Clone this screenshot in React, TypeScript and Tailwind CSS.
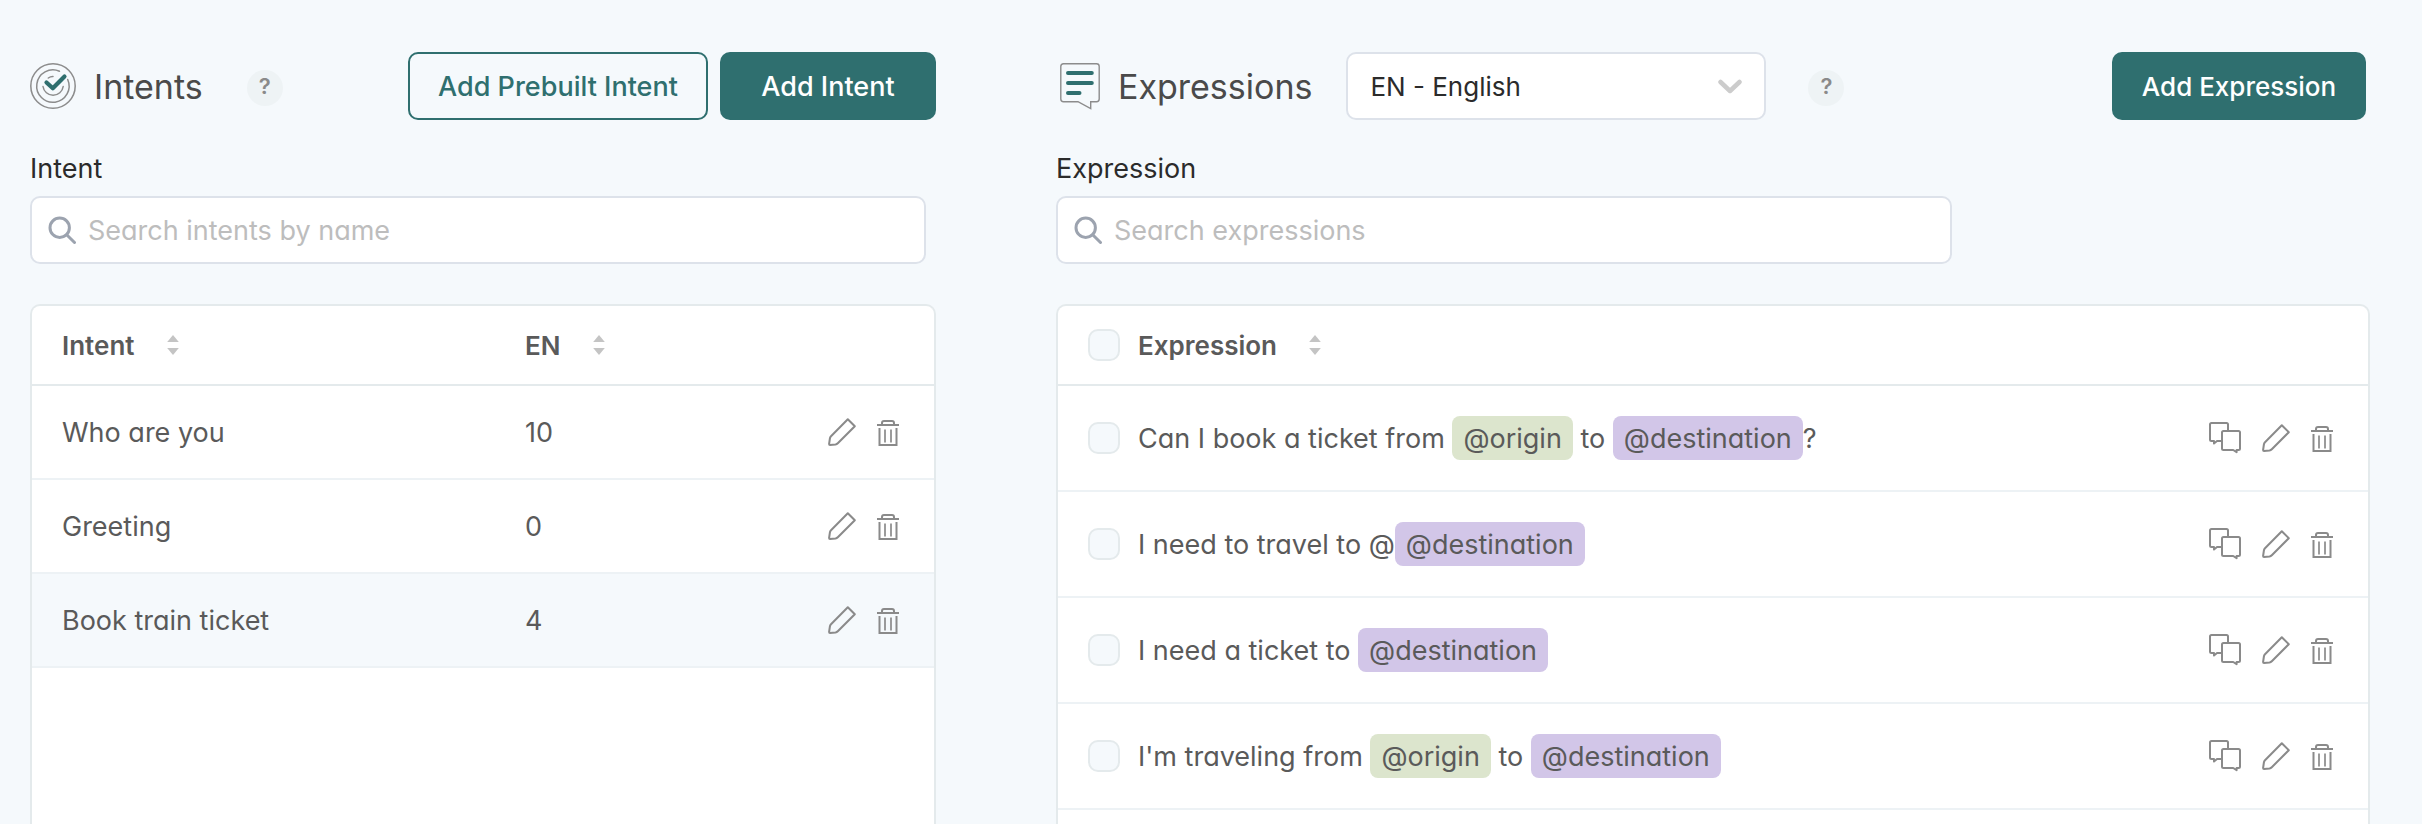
import React, { useState } from "react";

const fontStack =
  "font-['Inter','Liberation_Sans',sans-serif] [font-feature-settings:'cv11']";

function IntentsIcon() {
  return (
    <svg width="46" height="46" viewBox="0 0 46 46" fill="none" stroke="#8c8c8c" strokeWidth="1.5" strokeLinecap="round" aria-hidden="true">
      <circle cx="23" cy="23" r="22.2" />
      <path d="M29.500 8.300A16.200 16.200 0 1 0 37.700 16.500" />
      <path d="M13 23.500A10.200 10.200 0 0 0 33.200 23.500" />
      <path d="M18.300 15Q20.500 13.400 23 13.500" />
      <path d="M16.500 19.500L22.800 25.300L34.500 13.500" stroke="#2f6f6f" strokeWidth="4.200" strokeLinejoin="round" />
    </svg>
  );
}

function ExpressionsIcon() {
  return (
    <svg width="40" height="47" viewBox="0 0 40 47" fill="none" aria-hidden="true">
      <path d="M3.500 .8H36.500Q39.200 .8 39.200 3.500V36Q39.200 38.700 36.500 38.700H30.700V45.600L18 38.700H3.500Q.8 38.700 .8 36V3.500Q.8 .8 3.500 .8Z" stroke="#8c8c8c" strokeWidth="1.400" />
      <path d="M8 10H31.800M8 20H31.800M8 30H19.500" stroke="#2f6f6f" strokeWidth="4" strokeLinecap="round" />
    </svg>
  );
}

function SearchIcon() {
  return (
    <svg className="pointer-events-none absolute top-5 left-[18px]" width="28" height="28" viewBox="0 0 28 28" fill="none" stroke="#9ca3af" strokeWidth="3" strokeLinecap="round" aria-hidden="true">
      <circle cx="11.700" cy="11.700" r="9.700" />
      <path d="M18.700 18.700L26.500 26.500" />
    </svg>
  );
}

function SortIcon() {
  return (
    <svg width="12" height="20" viewBox="0 0 12 20" fill="#c4c4c4" aria-hidden="true">
      <path d="M6 0L11.800 7H.2Z" />
      <path d="M6 20L11.800 13H.2Z" />
    </svg>
  );
}

function ChatIcon() {
  return (
    <svg width="32" height="32" viewBox="0 0 32 32" fill="none" stroke="#8a8a8a" strokeWidth="2" strokeLinejoin="round" aria-hidden="true">
      <path d="M12.500 19H8L5 21.500V19H2.500Q1 19 1 17.500V2.500Q1 1 2.500 1H17.500Q19 1 19 2.500V8.500" />
      <path d="M14.500 9H29.500Q31 9 31 10.500V26.500Q31 28 29.500 28H27.600V30.200L24.200 28H14.500Q13 28 13 26.500V10.500Q13 9 14.500 9Z" />
    </svg>
  );
}

function PencilIcon() {
  return (
    <svg width="28" height="28" viewBox="0 0 28 28" fill="none" stroke="#8a8a8a" strokeWidth="2" strokeLinejoin="round" aria-hidden="true">
      <path d="M19.800 1.200L26.800 8.200L9.800 25.200Q8.800 26.200 7.500 26.400L2 26.900Q1.100 26.900 1.100 26L1.900 20.500Q2.100 19.200 3 18.300Z" />
    </svg>
  );
}

function TrashIcon() {
  return (
    <svg width="22" height="27" viewBox="0 0 22 27" fill="none" stroke="#8a8a8a" strokeWidth="2" aria-hidden="true">
      <path d="M0 6H22M5 6V4Q5 2 7 2H15Q17 2 17 4V6" />
      <path d="M2.500 9V26H19.500V9" />
      <path d="M8 10.500V23.500M14 10.500V23.500" strokeWidth="1.700" />
    </svg>
  );
}

function HelpButton() {
  return (
    <button type="button" aria-label="Help" className="mt-1 flex size-9 items-center justify-center rounded-full bg-[#eef3f5] pb-1 text-[22px] leading-none font-semibold text-[#8a8a8a]">
      ?
    </button>
  );
}

function SearchField({ id, label, placeholder }: { id: string; label: string; placeholder: string }) {
  return (
    <div className="flex flex-col">
      <label htmlFor={id} className="text-[27px] leading-[38px] text-[#2b2b2b]">
        {label}
      </label>
      <div className="relative mt-2 w-full max-w-[896px]">
        <input
          id={id}
          type="text"
          placeholder={placeholder}
          className="block h-[68px] w-full rounded-[10px] border-2 border-[#dde2ea] bg-white pr-4 pl-14 text-[27px] text-[#2b2b2b] outline-none placeholder:text-[#bdbdbd]"
        />
        <SearchIcon />
      </div>
    </div>
  );
}

function SortButton({ label }: { label: string }) {
  return (
    <button type="button" className="flex items-center gap-8 text-[26px] font-semibold">
      <span className="pt-0.5">{label}</span>
      <SortIcon />
    </button>
  );
}

function Checkbox({ label }: { label: string }) {
  return (
    <input
      type="checkbox"
      aria-label={label}
      className="block size-8 shrink-0 appearance-none rounded-[10px] border-2 border-[#e4eaec] bg-[#f5f9fc] checked:bg-[#2f6f6f]"
    />
  );
}

function RowActions({ name, chat = false }: { name: string; chat?: boolean }) {
  return (
    <div className="flex items-center justify-end gap-[21px]">
      {chat && (
        <button type="button" aria-label={"Responses for " + name}>
          <ChatIcon />
        </button>
      )}
      <button type="button" aria-label={"Edit " + name}>
        <PencilIcon />
      </button>
      <button type="button" aria-label={"Delete " + name}>
        <TrashIcon />
      </button>
    </div>
  );
}

const intents = [
  { name: "Who are you", count: 10 },
  { name: "Greeting", count: 0 },
  { name: "Book train ticket", count: 4 },
];

type Part = string | { entity: "origin" | "destination" };

const origin: Part = { entity: "origin" };
const destination: Part = { entity: "destination" };

const expressions: Part[][] = [
  ["Can I book a ticket from ", origin, " to ", destination, "?"],
  ["I need to travel to @", destination],
  ["I need a ticket to ", destination],
  ["I'm traveling from ", origin, " to ", destination],
];

const entityColors = {
  origin: "bg-[#dce5cd]",
  destination: "bg-[#d2c6e8]",
};

function plain(parts: Part[]) {
  return parts.map((p) => (typeof p === "string" ? p : "@" + p.entity)).join("");
}

function IntentsPanel() {
  return (
    <section className="flex min-w-0 flex-col">
      <header className="flex h-[68px] items-center">
        <IntentsIcon />
        <h1 className="ml-[18px] pt-0.5 text-[34px] leading-[44px] text-[#4a4a4a]">Intents</h1>
        <div className="ml-11">
          <HelpButton />
        </div>
        <div className="ml-auto flex gap-3">
          <button type="button" className="h-[68px] w-[300px] rounded-[10px] border-2 border-[#2f6f6f] pt-0.5 text-[27px] font-medium whitespace-nowrap text-[#2f6f6f]">
            Add Prebuilt Intent
          </button>
          <button type="button" className="h-[68px] w-[216px] rounded-[10px] bg-[#2f6f6f] pt-0.5 text-[27px] font-medium whitespace-nowrap text-white">
            Add Intent
          </button>
        </div>
      </header>
      <div className="mt-[30px]">
        <SearchField id="intent-search" label="Intent" placeholder="Search intents by name" />
      </div>
      <div className="mt-10 flex-1 rounded-t-[10px] border-2 border-b-0 border-[#e4eaec] bg-white">
        <table className="w-full table-fixed border-separate border-spacing-0 text-left text-[27px] leading-9 text-[#5a5a5a]">
          <thead>
            <tr className="h-20">
              <th className="w-[52%] border-b-2 border-[#e4eaec] pl-[30px]">
                <SortButton label="Intent" />
              </th>
              <th className="border-b-2 border-[#e4eaec] pl-6">
                <SortButton label="EN" />
              </th>
              <th className="border-b-2 border-[#e4eaec]">
                <span className="sr-only">Actions</span>
              </th>
            </tr>
          </thead>
          <tbody>
            {intents.map((row) => (
              <tr key={row.name} className="h-[94px] last:bg-[#f5f9fc]">
                <td className="border-b-2 border-[#edf2f5] pt-0.5 pl-[30px]">{row.name}</td>
                <td className="border-b-2 border-[#edf2f5] pt-0.5 pl-6">{row.count}</td>
                <td className="border-b-2 border-[#edf2f5] pr-[35px]">
                  <RowActions name={row.name} />
                </td>
              </tr>
            ))}
          </tbody>
        </table>
      </div>
    </section>
  );
}

function ExpressionsPanel() {
  const [language, setLanguage] = useState("en");
  return (
    <section className="flex min-w-0 flex-col">
      <header className="flex h-[68px] items-center pr-1 pl-1">
        <ExpressionsIcon />
        <h1 className="ml-[18px] pt-0.5 text-[34px] leading-[44px] text-[#4a4a4a]">Expressions</h1>
        <div className="relative ml-[34px] w-[420px]">
          <select
            aria-label="Language"
            value={language}
            onChange={(e) => setLanguage(e.target.value)}
            className="block h-[68px] w-full appearance-none rounded-[10px] border-2 border-[#dde2ea] bg-white pl-[22px] text-[26px] text-[#2b2b2b]"
          >
            <option value="en">EN - English</option>
          </select>
          <svg className="pointer-events-none absolute top-[27px] right-6 h-4 w-6" viewBox="0 0 24 16" fill="none" stroke="#cccccc" strokeWidth="4.500" strokeLinecap="round" strokeLinejoin="round" aria-hidden="true">
            <path d="M2.500 3L12 12L21.500 3" />
          </svg>
        </div>
        <div className="ml-[42px]">
          <HelpButton />
        </div>
        <button type="button" className="ml-auto h-[68px] w-[254px] rounded-[10px] bg-[#2f6f6f] text-[26px] font-medium whitespace-nowrap text-white">
          Add Expression
        </button>
      </header>
      <div className="mt-[30px]">
        <SearchField id="expression-search" label="Expression" placeholder="Search expressions" />
      </div>
      <div className="mt-10 flex-1 overflow-hidden rounded-t-[10px] border-2 border-b-0 border-[#e4eaec] bg-white">
        <table className="w-full border-separate border-spacing-0 text-left text-[27px] leading-9 text-[#5a5a5a]">
          <thead>
            <tr className="h-20">
              <th className="w-20 border-b-2 border-[#e4eaec] pl-[30px]">
                <Checkbox label="Select all expressions" />
              </th>
              <th className="border-b-2 border-[#e4eaec]">
                <SortButton label="Expression" />
              </th>
              <th className="border-b-2 border-[#e4eaec]">
                <span className="sr-only">Actions</span>
              </th>
            </tr>
          </thead>
          <tbody>
            {expressions.map((parts) => (
              <tr key={plain(parts)} className="h-[106px]">
                <td className="border-b-2 border-[#edf2f5] pl-[30px]">
                  <Checkbox label={plain(parts)} />
                </td>
                <td className="border-b-2 border-[#edf2f5] whitespace-pre">
                  {parts.map((part, i) =>
                    typeof part === "string" ? (
                      <span key={i}>{part}</span>
                    ) : (
                      <span key={i} className={"inline-block rounded-[8px] px-[11px] pt-[5px] pb-[3px] " + entityColors[part.entity]}>
                        @{part.entity}
                      </span>
                    ),
                  )}
                </td>
                <td className="border-b-2 border-[#edf2f5] pr-[35px]">
                  <RowActions name={plain(parts)} chat />
                </td>
              </tr>
            ))}
          </tbody>
        </table>
      </div>
    </section>
  );
}

export default function App() {
  return (
    <main className={"grid min-h-screen grid-cols-[906fr_1314fr] gap-[120px] bg-[#f5f9fc] pt-[52px] pr-[52px] pl-[30px] " + fontStack}>
      <IntentsPanel />
      <ExpressionsPanel />
    </main>
  );
}
